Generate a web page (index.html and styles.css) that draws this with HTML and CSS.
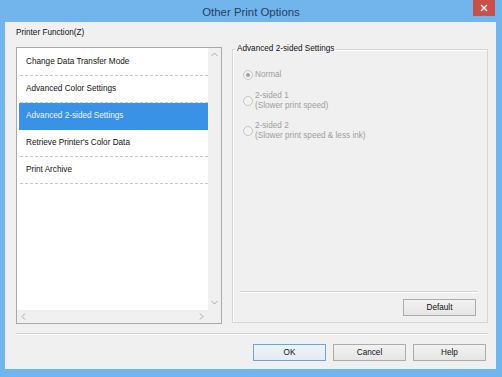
FILE: index.html
```html
<!DOCTYPE html>
<html>
<head>
<meta charset="utf-8">
<title>Other Print Options</title>
<link rel="stylesheet" href="styles.css">
</head>
<body>
<div class="window">
  <div class="titlebar">
    <span class="title">Other Print Options</span>
    <span class="close"><svg width="8" height="8" viewBox="0 0 8 8"><path d="M1 1L7 7M7 1L1 7" stroke="#fff" stroke-width="1.4"/></svg></span>
  </div>
  <div class="client">
    <div class="main">
      <div class="left">
        <div class="caption">Printer Function(Z)</div>
        <div class="listbox">
          <div class="list-area">
            <div class="items">
              <div class="item">Change Data Transfer Mode</div>
              <div class="item">Advanced Color Settings</div>
              <div class="item selected">Advanced 2-sided Settings</div>
              <div class="item">Retrieve Printer's Color Data</div>
              <div class="item">Print Archive</div>
            </div>
            <div class="vscroll">
              <span class="arrow"><svg width="7" height="5" viewBox="0 0 7 5"><path d="M0.5 4L3.5 1L6.5 4" fill="none" stroke="#a8a8a8" stroke-width="1"/></svg></span>
              <span class="arrow"><svg width="7" height="5" viewBox="0 0 7 5"><path d="M0.5 1L3.5 4L6.5 1" fill="none" stroke="#a8a8a8" stroke-width="1"/></svg></span>
            </div>
          </div>
          <div class="hscroll-row">
            <div class="hscroll">
              <span class="arrow"><svg width="5" height="7" viewBox="0 0 5 7"><path d="M4 0.5L1 3.5L4 6.5" fill="none" stroke="#a8a8a8" stroke-width="1"/></svg></span>
              <span class="arrow"><svg width="5" height="7" viewBox="0 0 5 7"><path d="M1 0.5L4 3.5L1 6.5" fill="none" stroke="#a8a8a8" stroke-width="1"/></svg></span>
            </div>
            <div class="corner"></div>
          </div>
        </div>
      </div>
      <fieldset class="group">
        <legend class="legend">Advanced 2-sided Settings</legend>
        <div class="group-body">
          <div class="radios">
            <div class="radio-row">
              <span class="radio checked"></span>
              <span class="radio-label">Normal</span>
            </div>
            <div class="radio-row">
              <span class="radio"></span>
              <span class="radio-label">2-sided 1<br>(Slower print speed)</span>
            </div>
            <div class="radio-row">
              <span class="radio"></span>
              <span class="radio-label">2-sided 2<br>(Slower print speed &amp; less ink)</span>
            </div>
          </div>
          <div class="group-sep"></div>
          <div class="group-actions">
            <button class="btn">Default</button>
          </div>
        </div>
      </fieldset>
    </div>
    <div class="separator"></div>
    <div class="buttons">
      <button class="btn btn-default">OK</button>
      <button class="btn">Cancel</button>
      <button class="btn">Help</button>
    </div>
  </div>
</div>
</body>
</html>
```
FILE: styles.css
```css
* { box-sizing: border-box; }
html, body { margin: 0; padding: 0; }
body {
  width: 502px;
  height: 377px;
  overflow: hidden;
  font-family: "Liberation Sans", Arial, sans-serif;
  font-size: 8.2px;
  color: #000;
}
.window {
  width: 502px;
  height: 377px;
  background: #72b4ec;
  padding: 0 6px 8px 5px;
  display: flex;
  flex-direction: column;
}
.titlebar {
  position: relative;
  height: 22px;
  display: flex;
  align-items: center;
  justify-content: center;
  margin: 0 -6px 0 -5px;
}
.title {
  font-size: 11.4px;
  color: #23405f;
  line-height: 14px;
  padding-top: 2px;
}
.close {
  position: absolute;
  top: 0;
  left: 473px;
  width: 22px;
  height: 16px;
  background: #c9504a;
  display: flex;
  align-items: center;
  justify-content: center;
}
.close svg { display: block; }
.client {
  flex: 1;
  background: #f0f0f0;
  border-left: 2px solid #f5ecea;
  padding: 6px 8px 8px 9px;
  display: flex;
  flex-direction: column;
}
.main {
  display: grid;
  grid-template-columns: 206px 256px;
  column-gap: 10px;
  align-items: start;
}
.caption {
  height: 10px;
  line-height: 10px;
  margin-bottom: 9px;
  color: #111;
}
.listbox {
  height: 277px;
  border: 1px solid #a9a9a9;
  background: #fff;
  display: flex;
  flex-direction: column;
}
.list-area {
  height: 262px;
  display: flex;
}
.items {
  flex: 1;
  padding: 1px 0 0 3px;
  background: #fff;
}
.item {
  height: 27px;
  line-height: 26px;
  padding-left: 6px;
  color: #111;
  white-space: nowrap;
  background: repeating-linear-gradient(90deg, #c9c9c9 0 3px, transparent 3px 5px) left bottom / 100% 1px no-repeat;
}
.item.selected {
  background: #3a92e6;
  color: #eef5fd;
  margin-left: -1px;
  padding-left: 7px;
}
.vscroll {
  width: 13px;
  background: #f0f0f0;
  display: flex;
  flex-direction: column;
  justify-content: space-between;
  padding-bottom: 1px;
}
.arrow {
  width: 13px;
  height: 13px;
  display: flex;
  align-items: center;
  justify-content: center;
}
.arrow svg { display: block; }
.hscroll-row {
  height: 13px;
  display: flex;
}
.hscroll {
  flex: 1;
  background: #f0f0f0;
  display: flex;
  justify-content: space-between;
}
.corner {
  width: 13px;
  background: #f0f0f0;
}
.group {
  margin: 16px 0 0 0;
  padding: 0;
  min-width: 0;
  height: 279px;
  border: 1px solid #d6d6d6;
  box-shadow: inset 1px 1px 0 #fff;
}
.legend {
  margin-left: 2px;
  padding: 0 2px;
  line-height: 10px;
  height: 10px;
  color: #111;
}
.group-body {
  height: 268px;
  display: flex;
  flex-direction: column;
  padding: 16px 0 6px 10px;
}
.radios {
  display: flex;
  flex-direction: column;
  gap: 10px;
}
.radios .radio-row:nth-child(2) { margin-top: 1px; }
.radio-row {
  display: flex;
  align-items: center;
  gap: 2px;
}
.radio {
  width: 10px;
  height: 10px;
  border-radius: 50%;
  border: 1px solid #c6c6c6;
  background: #f3f3f3;
  display: flex;
  align-items: center;
  justify-content: center;
  flex: none;
}
.radio.checked::after {
  content: "";
  width: 4px;
  height: 4px;
  border-radius: 50%;
  background: #a2a2a2;
}
.radio-label {
  line-height: 10px;
  color: #9e9e9e;
}
.group-sep {
  margin: auto 9px 6px -3px;
  height: 2px;
  border-top: 1px solid #d4d4d4;
  border-bottom: 1px solid #fff;
}
.group-actions {
  display: flex;
  justify-content: flex-end;
  padding-right: 11px;
}
.btn {
  width: 73px;
  height: 17px;
  padding: 0;
  margin: 0;
  font-family: "Liberation Sans", Arial, sans-serif;
  font-size: 8.2px;
  color: #111;
  border: 1px solid #acacac;
  background: linear-gradient(#f2f2f2, #e6e6e6);
  border-radius: 0;
}
.btn-default {
  border-color: #6aa5dd;
  background: linear-gradient(#eef3f8, #e4ebf2);
}
.separator {
  margin-top: 9px;
  height: 2px;
  border-top: 1px solid #d2d2d2;
  border-bottom: 1px solid #fff;
}
.buttons {
  margin-top: 9px;
  display: flex;
  justify-content: flex-end;
  gap: 7px;
  padding-right: 2px;
}
```
